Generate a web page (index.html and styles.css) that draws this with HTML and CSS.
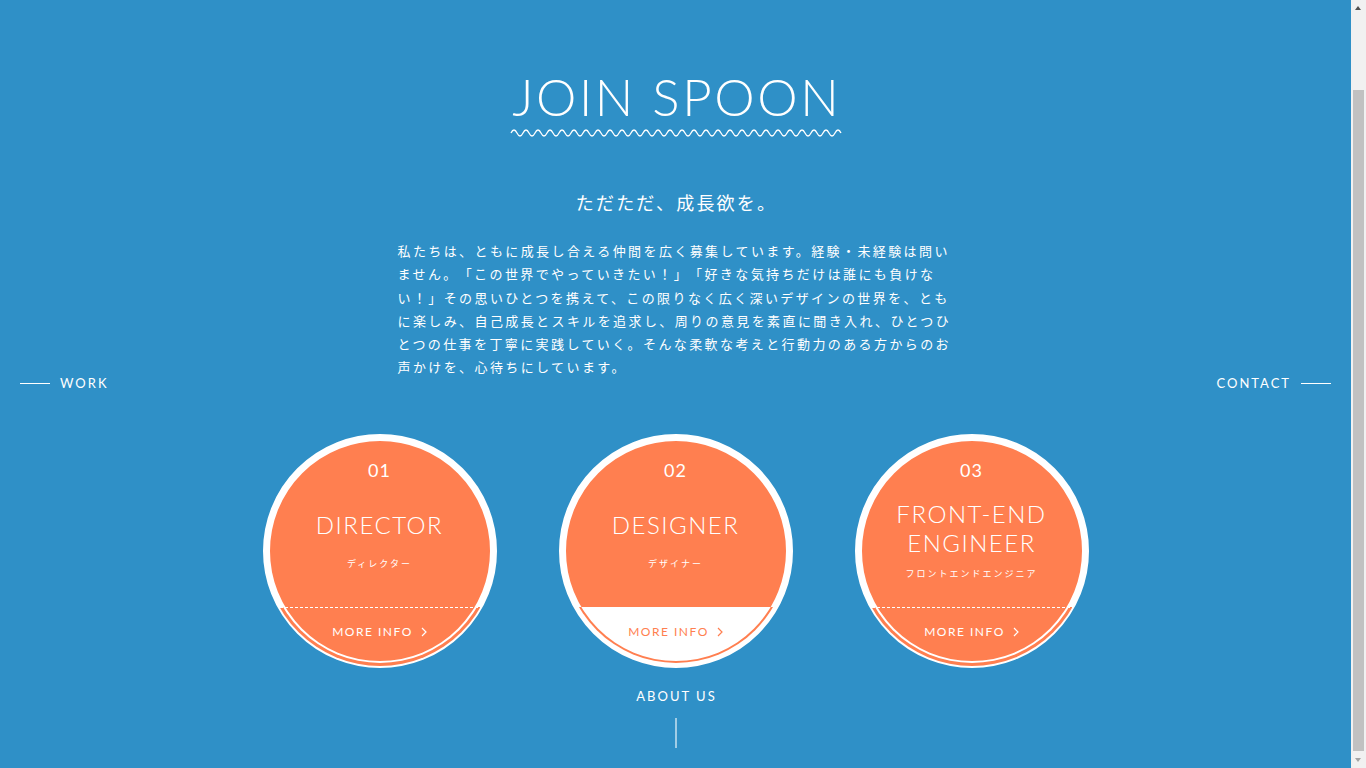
FILE: index.html
```html
<!DOCTYPE html>
<html lang="ja">
<head>
<meta charset="utf-8">
<title>JOIN SPOON</title>
<link rel="stylesheet" href="styles.css">
</head>
<body>
<div class="page">
  <main class="main">
    <header class="hero">
      <h1 class="hero-title">JOIN SPOON</h1>
      <svg class="hero-wave" width="332" height="10" viewBox="0 0 332 10" aria-hidden="true">
        <path d="M1 5 Q4 -1 7 5 t6 0 t6 0 t6 0 t6 0 t6 0 t6 0 t6 0 t6 0 t6 0 t6 0 t6 0 t6 0 t6 0 t6 0 t6 0 t6 0 t6 0 t6 0 t6 0 t6 0 t6 0 t6 0 t6 0 t6 0 t6 0 t6 0 t6 0 t6 0 t6 0 t6 0 t6 0 t6 0 t6 0 t6 0 t6 0 t6 0 t6 0 t6 0 t6 0 t6 0 t6 0 t6 0 t6 0 t6 0 t6 0 t6 0 t6 0 t6 0 t6 0 t6 0 t6 0 t6 0 t6 0 t6 0" fill="none" stroke="#fff" stroke-width="1.3"/>
      </svg>
      <h2 class="hero-lead">ただただ、成長欲を。</h2>
      <p class="hero-text">私たちは、ともに成長し合える仲間を広く募集しています。経験・未経験は問い<br>ません。「この世界でやっていきたい！」「好きな気持ちだけは誰にも負けな<br>い！」その思いひとつを携えて、この限りなく広く深いデザインの世界を、とも<br>に楽しみ、自己成長とスキルを追求し、周りの意見を素直に聞き入れ、ひとつひ<br>とつの仕事を丁寧に実践していく。そんな柔軟な考えと行動力のある方からのお<br>声かけを、心待ちにしています。</p>
    </header>

    <ul class="jobs">
      <li class="job">
        <a class="job-circle" href="#">
          <span class="job-num">01</span>
          <span class="job-body">
            <span class="job-title">DIRECTOR</span>
            <span class="job-kana">ディレクター</span>
          </span>
          <span class="job-more"><span class="job-more-label">MORE INFO<svg class="chev" width="6" height="10" viewBox="0 0 6 10"><path d="M1 1 L5 5 L1 9" fill="none" stroke="currentColor" stroke-width="1.2"/></svg></span></span>
        </a>
      </li>
      <li class="job">
        <a class="job-circle is-hover" href="#">
          <span class="job-num">02</span>
          <span class="job-body">
            <span class="job-title">DESIGNER</span>
            <span class="job-kana">デザイナー</span>
          </span>
          <span class="job-more"><span class="job-more-label">MORE INFO<svg class="chev" width="6" height="10" viewBox="0 0 6 10"><path d="M1 1 L5 5 L1 9" fill="none" stroke="currentColor" stroke-width="1.2"/></svg></span></span>
        </a>
      </li>
      <li class="job">
        <a class="job-circle job-long" href="#">
          <span class="job-num">03</span>
          <span class="job-body">
            <span class="job-title">FRONT-END<br>ENGINEER</span>
            <span class="job-kana">フロントエンドエンジニア</span>
          </span>
          <span class="job-more"><span class="job-more-label">MORE INFO<svg class="chev" width="6" height="10" viewBox="0 0 6 10"><path d="M1 1 L5 5 L1 9" fill="none" stroke="currentColor" stroke-width="1.2"/></svg></span></span>
        </a>
      </li>
    </ul>

    <a class="about" href="#">ABOUT US</a>
    <span class="about-line"></span>

    <a class="side side-left" href="#"><span class="side-rule"></span>WORK</a>
    <a class="side side-right" href="#">CONTACT<span class="side-rule"></span></a>
  </main>

  <div class="scrollbar" aria-hidden="true">
    <span class="sb-up"></span>
    <span class="sb-track"><span class="sb-thumb"></span></span>
    <span class="sb-down"></span>
  </div>
</div>
</body>
</html>
```

FILE: styles.css
```css
* { box-sizing: border-box; }
html, body { margin: 0; padding: 0; height: 100%; overflow: hidden; }
body {
  background: #2f90c7;
  color: #fff;
  font-family: Lato, "Noto Sans CJK JP", sans-serif;
}
a { color: inherit; text-decoration: none; }

.page { display: flex; height: 768px; }
.main {
  flex: 1;
  position: relative;
  display: flex;
  flex-direction: column;
  align-items: center;
  padding-top: 71px;
}

/* hero */
.hero { display: flex; flex-direction: column; align-items: center; }
.hero-title {
  margin: 0;
  font-weight: 300;
  font-size: 51px;
  line-height: 51px;
  letter-spacing: 2.6px;
  padding-left: 2.6px;
}
.hero-wave { display: block; margin-top: 6px; }
.hero-lead {
  margin: 51px 0 0;
  font-family: "Noto Sans CJK JP", sans-serif;
  font-weight: 400;
  font-size: 18px;
  line-height: 26px;
  letter-spacing: 2.2px;
  padding-left: 2px;
}
.hero-text {
  margin: 24px 0 0;
  width: 556px;
  font-family: "Noto Sans CJK JP", sans-serif;
  font-size: 13px;
  line-height: 23.3px;
  letter-spacing: 2.4px;
  white-space: nowrap;
  text-spacing-trim: space-all;
}

/* jobs */
.jobs {
  list-style: none;
  margin: 55px 0 0;
  padding: 0;
  display: flex;
  gap: 62px;
}
.job-circle {
  position: relative;
  display: flex;
  flex-direction: column;
  align-items: center;
  width: 234px;
  height: 234px;
  border-radius: 50%;
  border: 7px solid #fff;
  background: #ff7f50;
  text-align: center;
}
.job-num {
  margin-top: 19px;
  font-size: 18px;
  line-height: 20px;
  letter-spacing: 1px;
}
.job-body {
  height: 120px;
  display: flex;
  flex-direction: column;
  align-items: center;
  justify-content: center;
}
.job-title {
  font-weight: 300;
  font-size: 24px;
  line-height: 29px;
  letter-spacing: 1.5px;
}
.job-kana {
  margin-top: 19px;
  font-family: "Noto Sans CJK JP", sans-serif;
  font-size: 9px;
  line-height: 12px;
  letter-spacing: 2px;
}
.job-long .job-kana { margin-top: 11px; }

.job-more {
  position: absolute;
  left: 10px;
  top: 166px;
  width: 200px;
  height: 60px;
  overflow: hidden;
  display: flex;
  justify-content: center;
  align-items: flex-start;
  padding-top: 18px;
}
.job-more::before {
  content: "";
  position: absolute;
  left: -12px;
  top: -168px;
  width: 224px;
  height: 224px;
  border-radius: 50%;
  background: #ff7f50;
  box-shadow: 0 0 0 3px #ff7f50, inset 0 0 0 2px #fff;
}
.job-more::after {
  content: "";
  position: absolute;
  left: 0;
  right: 0;
  top: 0;
  height: 1px;
  background: repeating-linear-gradient(90deg, #fff 0 3px, transparent 3px 5px);
}
.job-more-label {
  position: relative;
  z-index: 1;
  display: flex;
  align-items: center;
  gap: 8px;
  font-size: 12px;
  line-height: 14px;
  letter-spacing: 1.5px;
}
.chev { display: block; }

.is-hover .job-more::before {
  background: #fff;
  box-shadow: 0 0 0 3px #fff, inset 0 0 0 2px #ff7f50;
}
.is-hover .job-more::after { display: none; }
.is-hover .job-more-label { color: #ff7f50; }

/* about */
.about {
  margin-top: 20px;
  font-size: 13px;
  line-height: 16px;
  letter-spacing: 2px;
  padding-left: 2px;
}
.about-line {
  display: block;
  margin-top: 14px;
  width: 2px;
  height: 30px;
  background: rgba(255, 255, 255, 0.55);
}

/* side nav */
.side {
  position: absolute;
  top: 375px;
  display: flex;
  align-items: center;
  gap: 10px;
  font-size: 13px;
  line-height: 16px;
  letter-spacing: 2px;
}
.side-left { left: 20px; }
.side-right { right: 20px; }
.side-rule { display: block; width: 30px; height: 1px; background: #fff; }

/* fake browser scrollbar */
.scrollbar {
  width: 15px;
  height: 768px;
  background: #f1f1f1;
  display: flex;
  flex-direction: column;
  align-items: center;
}
.sb-up, .sb-down {
  flex: 0 0 17px;
  width: 15px;
  position: relative;
}
.sb-up::before, .sb-down::before {
  content: "";
  position: absolute;
  left: 4px;
  width: 0; height: 0;
  border-left: 3.5px solid transparent;
  border-right: 3.5px solid transparent;
}
.sb-up::before { top: 6px; border-bottom: 4px solid #505050; }
.sb-down::before { top: 7px; border-top: 4px solid #a3a3a3; }
.sb-track { flex: 1; width: 100%; display: flex; flex-direction: column; align-items: center; }
.sb-thumb { margin-top: 73px; width: 11px; flex: 1; background: #c1c1c1; }
```
